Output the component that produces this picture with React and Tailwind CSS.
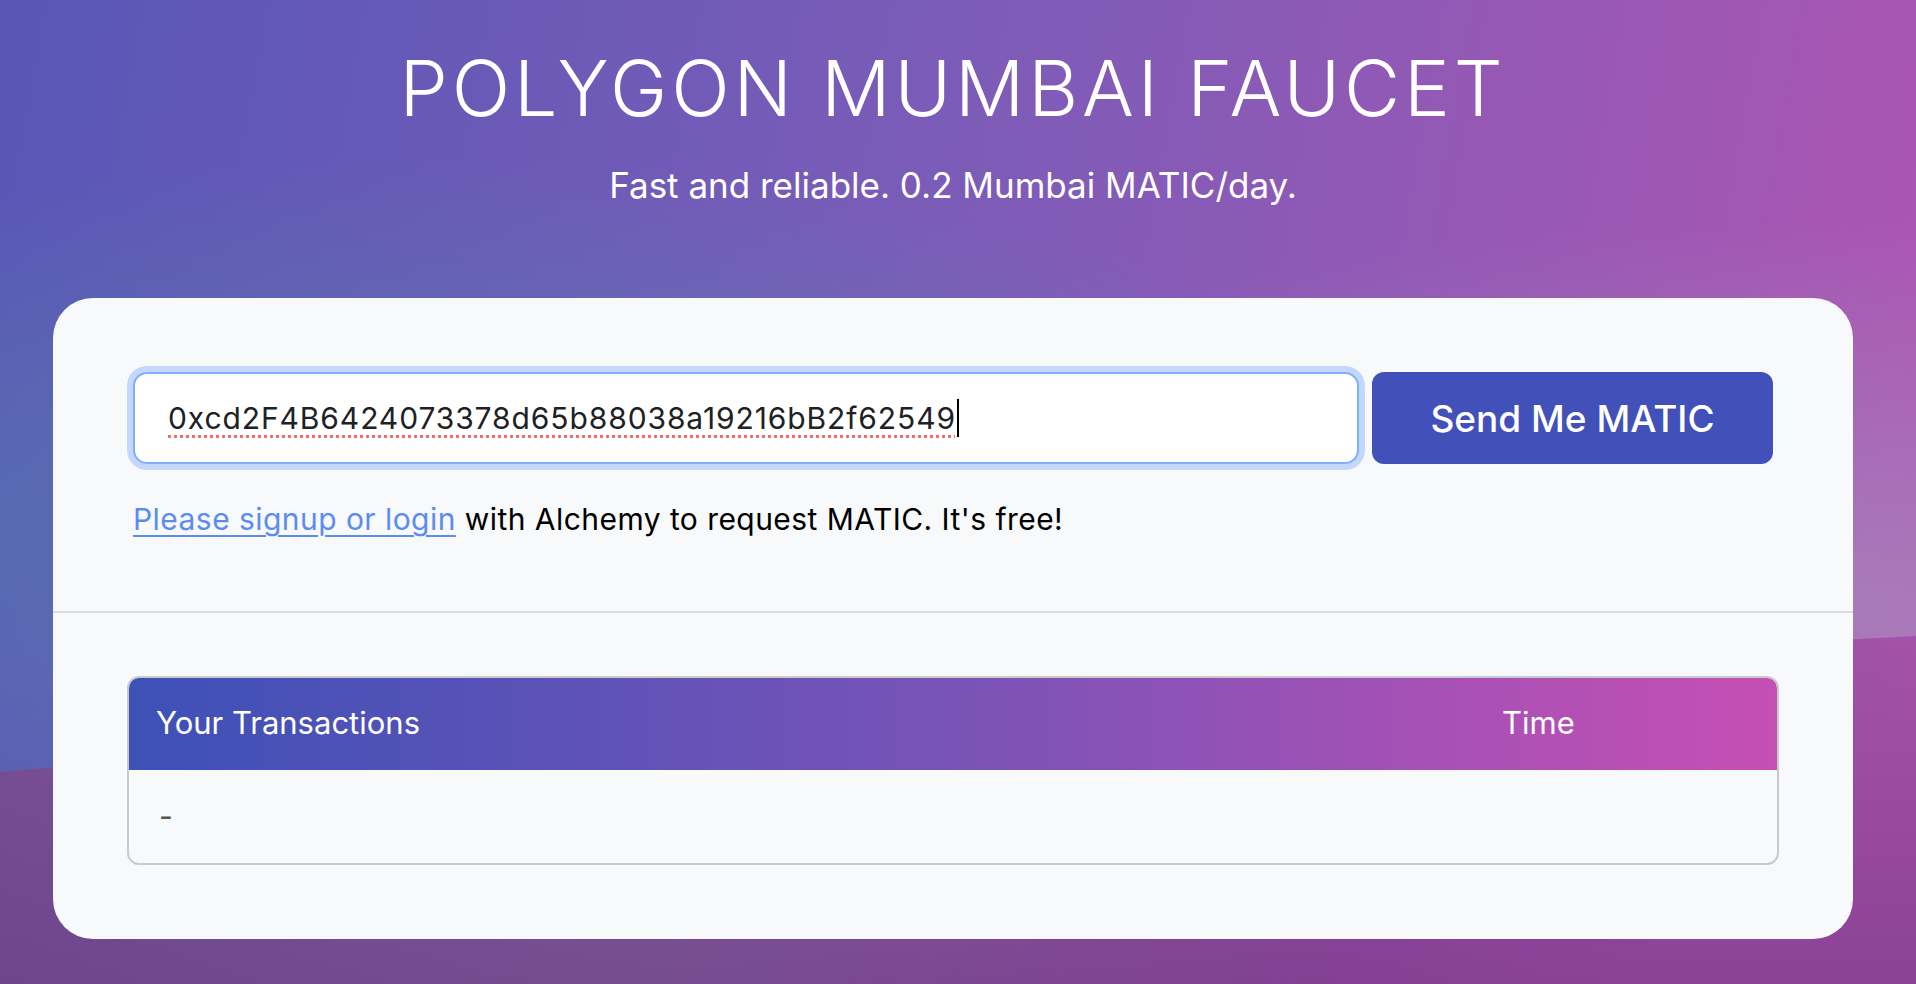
export default function App() {
  return (
    <div
      className="relative w-full h-[984px] overflow-hidden bg-[radial-gradient(ellipse_at_22%_55%,rgba(85,128,172,0.7),rgba(85,128,172,0)_50%),radial-gradient(ellipse_at_95%_62%,rgba(165,170,195,0.45),rgba(165,170,195,0)_45%),linear-gradient(100deg,#5857b6_0%,#7a5cb8_45%,#b055b2_100%)]"
      style={{ fontFamily: 'Inter, "Noto Sans", sans-serif' }}
    >
      <svg
        className="absolute inset-0"
        width="1916"
        height="984"
        viewBox="0 0 1916 984"
        preserveAspectRatio="none"
      >
        <defs>
          <linearGradient id="wave" x1="0" y1="0" x2="1" y2="0.2">
            <stop offset="0" stopColor="#7b5098" />
            <stop offset="0.5" stopColor="#8a60a1" />
            <stop offset="0.85" stopColor="#9c50a7" />
            <stop offset="1" stopColor="#a652aa" />
          </linearGradient>
          <linearGradient id="waveShade" x1="0" y1="0" x2="0" y2="1">
            <stop offset="0" stopColor="#2a0a50" stopOpacity="0" />
            <stop offset="1" stopColor="#2a0a50" stopOpacity="0.22" />
          </linearGradient>
        </defs>
        <path d="M0,772 Q900,690 1916,636 L1916,984 L0,984 Z" fill="url(#wave)" />
        <path d="M0,772 Q900,690 1916,636 L1916,984 L0,984 Z" fill="url(#waveShade)" />
      </svg>

      <div className="relative w-[1906px] flex flex-col items-center">
        <h1 className="pt-[50px] text-[77px] leading-none font-light tracking-[0.05em] text-white">
          POLYGON MUMBAI FAUCET
        </h1>
        <p className="mt-[41px] text-[35px] leading-none text-white">
          Fast and reliable. 0.2 Mumbai MATIC/day.
        </p>

        <div className="mt-[95px] w-[1800px] h-[641px] rounded-[40px] bg-[#f8f9fb] flex flex-col">
          <div className="px-[80px] pt-[74px] pb-[77px]">
            <div className="flex gap-[13px]">
              <div className="flex-1 h-[92px] flex items-center rounded-[14px] border-2 border-[#80b1f8] bg-white pl-[33px] shadow-[0_0_0_6px_#c3d8fc]">
                <span className="text-[30px] leading-none tracking-[0.03em] text-[#202124] underline decoration-dotted decoration-[#f26a6a] decoration-[3px] underline-offset-[6px]">
                  0xcd2F4B6424073378d65b88038a19216bB2f62549
                </span>
                <span className="w-[2px] h-[38px] bg-black ml-[1px]" />
              </div>
              <button className="w-[401px] h-[92px] rounded-[12px] bg-[#4251b9] text-white text-[37px] font-medium leading-none">
                Send Me MATIC
              </button>
            </div>
            <p className="mt-[40px] text-[30px] leading-none tracking-[0.015em] text-black">
              <a href="#" className="text-[#5b8cf0] underline underline-offset-[5px] decoration-2">
                Please signup or login
              </a>{" "}
              with Alchemy to request MATIC. It's free!
            </p>
          </div>

          <div className="border-t-2 border-[#dcdcdc]" />

          <div className="px-[74px] pt-[63px]">
            <div className="rounded-[12px] border-2 border-[#c9cace] overflow-hidden">
              <div className="h-[94px] flex items-center text-white text-[31px] bg-[linear-gradient(90deg,#3d51b7_0%,#7953b7_50%,#c64fb4_100%)] -mx-[2px] -mt-[2px]">
                <div className="flex-1 pl-[29px]">Your Transactions</div>
                <div className="w-[277px]">Time</div>
              </div>
              <div className="h-[93px] flex items-center pl-[30px] text-[30px] text-[#555]">
                -
              </div>
            </div>
          </div>
        </div>
      </div>
    </div>
  );
}
